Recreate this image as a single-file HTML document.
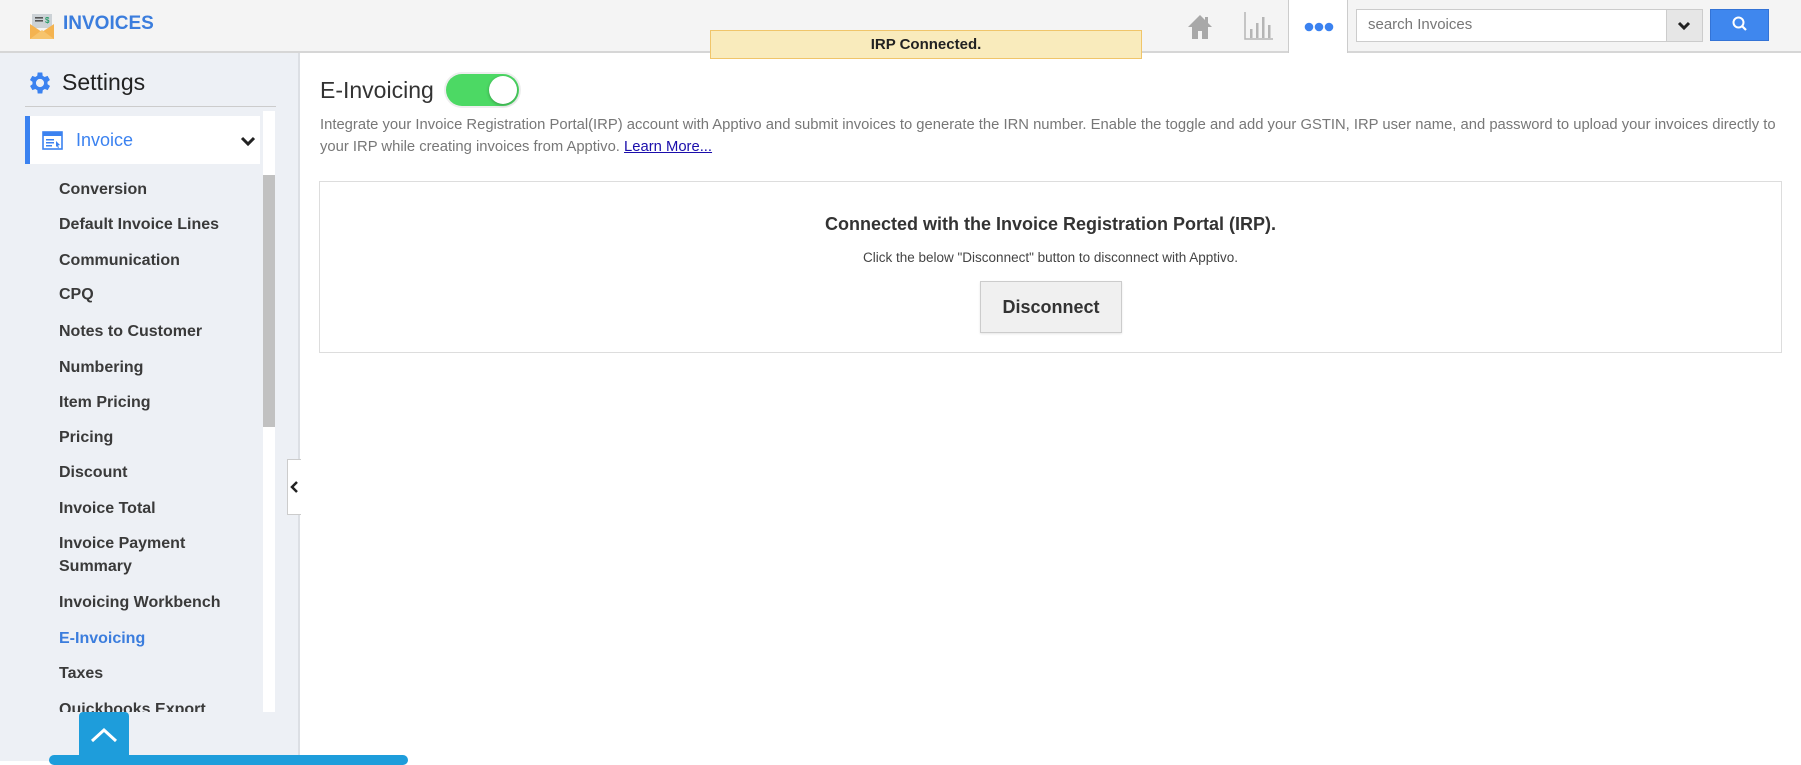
<!DOCTYPE html>
<html><head><meta charset="utf-8"><style>
*{box-sizing:border-box;margin:0;padding:0}
body{width:1801px;height:761px;overflow:hidden;background:#fff;font-family:"Liberation Sans",sans-serif;position:relative;color:#333}
.a{position:absolute}
#hdr{left:0;top:0;width:1801px;height:53px;background:#f4f4f4;border-bottom:2px solid #d6d6d6}
#side{left:0;top:53px;width:300px;height:708px;background:#edf0f5;border-right:2px solid #dcdfe4}
.mi{position:absolute;left:59px;font-size:16px;font-weight:bold;color:#3a3a3a;white-space:nowrap}
</style></head><body>
<div id="hdr" class="a"></div>
<svg class="a" style="left:29px;top:13px" width="26" height="26" viewBox="0 0 26 26"><rect x="3" y="1" width="20" height="14" fill="#ccd2d6"/><rect x="6" y="4" width="8" height="1.6" fill="#555"/><rect x="6" y="7" width="8" height="1.6" fill="#555"/><text x="16" y="10" font-size="8" fill="#2a9d6a" font-weight="bold" font-family="Liberation Sans">$</text><path d="M1 11 L13 19 L25 11 V26 H1Z" fill="#f4b350"/><path d="M1 26 L13 17 L25 26Z" fill="#f7c46c"/></svg>
<div class="a" style="left:63px;top:13px;font-size:19px;font-weight:bold;color:#3b7ddd">INVOICES</div>
<div class="a" style="left:710px;top:30px;width:432px;height:29px;background:#f9ebbc;border:1px solid #f0c56a;text-align:center;font-size:15px;font-weight:bold;line-height:27px;color:#222">IRP Connected.</div>
<svg class="a" style="left:1186px;top:13px" width="28" height="27" viewBox="0 0 28 27"><path d="M14 2 L2 14 H6 V26 H12 V18 H16 V26 H22 V14 H26Z" fill="#a8a8a8"/><rect x="19" y="4" width="3" height="6" fill="#a8a8a8"/></svg>
<svg class="a" style="left:1244px;top:11px" width="30" height="29" viewBox="0 0 30 29"><path d="M1 1V28H29" stroke="#b5b5b5" stroke-width="1.5" fill="none"/><rect x="6" y="18" width="2.5" height="9" fill="#b5b5b5"/><rect x="12" y="12" width="2.5" height="15" fill="#b5b5b5"/><rect x="18" y="6" width="2.5" height="21" fill="#b5b5b5"/><rect x="24" y="14" width="2.5" height="13" fill="#b5b5b5"/></svg>
<div class="a" style="left:1288px;top:0;width:60px;height:53px;background:#fff;border-left:1px solid #ccc;border-right:1px solid #ccc"></div>
<svg class="a" style="left:1304px;top:21px" width="30" height="12"><circle cx="5" cy="6" r="4.3" fill="#3b82f0"/><circle cx="15" cy="6" r="4.3" fill="#3b82f0"/><circle cx="25" cy="6" r="4.3" fill="#3b82f0"/></svg>
<div class="a" style="left:1356px;top:9px;width:347px;height:33px;background:#fff;border:1px solid #ccc"></div>
<div class="a" style="left:1368px;top:16px;font-size:15px;color:#777">search Invoices</div>
<div class="a" style="left:1666px;top:10px;width:36px;height:31px;background:#e6e6e6;border-left:1px solid #ccc"></div>
<svg class="a" style="left:1677px;top:21px" width="14" height="10"><path d="M2 2L7 7L12 2" stroke="#222" stroke-width="3" fill="none"/></svg>
<div class="a" style="left:1710px;top:9px;width:59px;height:32px;background:#3f87ee;border:1px solid #3373d6"></div>
<svg class="a" style="left:1731px;top:15px" width="18" height="18"><circle cx="7.5" cy="7.5" r="5" stroke="#fff" stroke-width="2" fill="none"/><path d="M11 11L15 15" stroke="#fff" stroke-width="2.2"/></svg>

<div id="side" class="a"></div>
<svg class="a" style="left:26px;top:69px" width="28" height="28" viewBox="0 0 24 24"><path fill="#3b82f0" d="M19.4 13a7.5 7.5 0 0 0 0-2l2.1-1.6-2-3.5-2.5 1a7.3 7.3 0 0 0-1.700-1L15 3h-4l-.4 2.9a7.3 7.3 0 0 0-1.7 1l-2.5-1-2 3.5L6.6 11a7.5 7.5 0 0 0 0 2l-2.1 1.6 2 3.5 2.5-1a7.3 7.3 0 0 0 1.7 1L11 21h4l.4-2.9a7.3 7.3 0 0 0 1.7-1l2.5 1 2-3.5zM13 15.5a3.5 3.5 0 1 1 0-7 3.5 3.5 0 0 1 0 7z" transform="translate(-1 0)"/></svg>
<div class="a" style="left:62px;top:69px;font-size:23px;color:#222">Settings</div>
<div class="a" style="left:25px;top:106px;width:251px;height:1px;background:#ccc"></div>
<div class="a" style="left:263px;top:111px;width:12px;height:601px;background:#fff"></div>
<div class="a" style="left:263px;top:175px;width:12px;height:252px;background:#c1c1c1"></div>
<div class="a" style="left:25px;top:116px;width:235px;height:48px;background:#fff;border-left:5px solid #3b82f0"></div>
<svg class="a" style="left:42px;top:131px" width="22" height="20" viewBox="0 0 22 20"><rect x="1" y="1" width="19" height="17" fill="none" stroke="#3b82f0" stroke-width="1.6"/><rect x="1" y="1" width="19" height="4" fill="#3b82f0"/><rect x="4" y="8" width="8" height="1.5" fill="#3b82f0"/><rect x="4" y="11" width="8" height="1.5" fill="#3b82f0"/><rect x="4" y="14" width="6" height="1.5" fill="#3b82f0"/><path d="M14 10l4 4-2 .5 1 2-1 .5-1-2-1 1z" fill="#3b82f0"/></svg>
<div class="a" style="left:76px;top:130px;font-size:18px;color:#3b82f0">Invoice</div>
<svg class="a" style="left:240px;top:136px" width="16" height="11"><path d="M2 2L8 8L14 2" stroke="#222" stroke-width="3" fill="none"/></svg>
<div style="position:absolute;left:0;top:107px;width:263px;height:605px;overflow:hidden">
<div class="mi" style="top:74px">Conversion</div>
<div class="mi" style="top:109px">Default Invoice Lines</div>
<div class="mi" style="top:145px">Communication</div>
<div class="mi" style="top:179px">CPQ</div>
<div class="mi" style="top:216px">Notes to Customer</div>
<div class="mi" style="top:252px">Numbering</div>
<div class="mi" style="top:287px">Item Pricing</div>
<div class="mi" style="top:322px">Pricing</div>
<div class="mi" style="top:357px">Discount</div>
<div class="mi" style="top:393px">Invoice Total</div>
<div class="mi" style="top:428px">Invoice Payment</div>
<div class="mi" style="top:451px">Summary</div>
<div class="mi" style="top:487px">Invoicing Workbench</div>
<div class="mi" style="top:523px;color:#3b7ddd">E-Invoicing</div>
<div class="mi" style="top:558px">Taxes</div>
<div class="mi" style="top:594px">Quickbooks Export</div>
</div>
<div class="a" style="left:287px;top:459px;width:14px;height:56px;background:#fff;border:1px solid #ccc;border-right:none"></div>
<svg class="a" style="left:289px;top:480px" width="10" height="14"><path d="M8 2L3 7L8 12" stroke="#222" stroke-width="2.5" fill="none"/></svg>
<div class="a" style="left:49px;top:755px;width:359px;height:10px;background:#1e9ddb;border-radius:5px"></div>
<div class="a" style="left:79px;top:712px;width:50px;height:49px;background:#1e9ddb;border-radius:4px 4px 0 0"></div>
<svg class="a" style="left:89px;top:726px" width="30" height="18"><path d="M3 15L15 4L27 15" stroke="#fff" stroke-width="3" fill="none"/></svg>

<div class="a" style="left:320px;top:77px;font-size:23px;color:#333">E-Invoicing</div>
<div class="a" style="left:446px;top:74px;width:73px;height:32px;border-radius:16px;background:#4cd964;box-shadow:0 0 0 2px #eee"></div>
<div class="a" style="left:489px;top:76px;width:28px;height:28px;border-radius:50%;background:#fff;box-shadow:0 1px 3px rgba(0,0,0,.3)"></div>
<div class="a" style="left:320px;top:114px;width:1466px;font-size:14.8px;line-height:22px;color:#777">Integrate your Invoice Registration Portal(IRP) account with Apptivo and submit invoices to generate the IRN number. Enable the toggle and add your GSTIN, IRP user name, and password to upload your invoices directly to your IRP while creating invoices from Apptivo. <span style="color:#1a0dab;text-decoration:underline">Learn More...</span></div>
<div class="a" style="left:319px;top:181px;width:1463px;height:172px;border:1px solid #ddd"></div>
<div class="a" style="left:319px;top:214px;width:1463px;text-align:center;font-size:18px;font-weight:bold;color:#333">Connected with the Invoice Registration Portal (IRP).</div>
<div class="a" style="left:319px;top:250px;width:1463px;text-align:center;font-size:13.5px;color:#444">Click the below "Disconnect" button to disconnect with Apptivo.</div>
<div class="a" style="left:980px;top:281px;width:142px;height:52px;background:#f0f0f0;border:1px solid #ccc;text-align:center;line-height:50px;font-size:18px;font-weight:bold;color:#333;box-shadow:0 1px 2px rgba(0,0,0,.1)">Disconnect</div>
</body></html>
